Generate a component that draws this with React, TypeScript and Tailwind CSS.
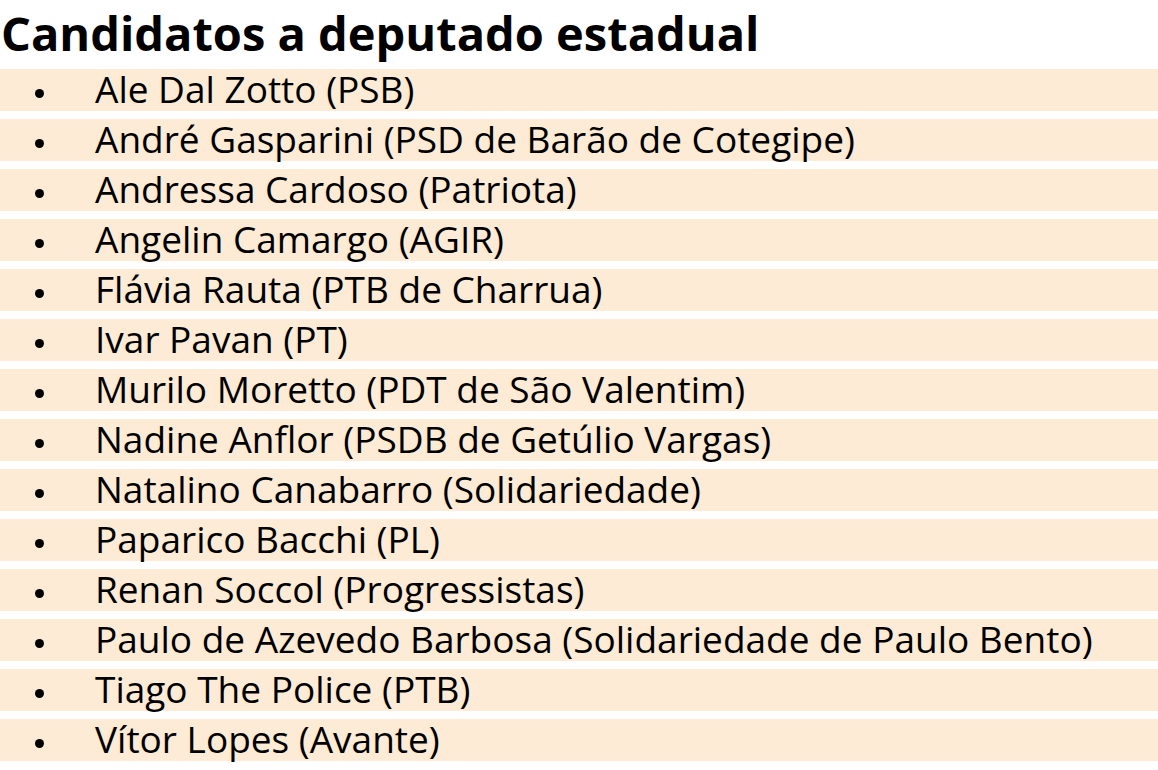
const candidatos = [
  "Ale Dal Zotto (PSB)",
  "André Gasparini (PSD de Barão de Cotegipe)",
  "Andressa Cardoso (Patriota)",
  "Angelin Camargo (AGIR)",
  "Flávia Rauta (PTB de Charrua)",
  "Ivar Pavan (PT)",
  "Murilo Moretto (PDT de São Valentim)",
  "Nadine Anflor (PSDB de Getúlio Vargas)",
  "Natalino Canabarro (Solidariedade)",
  "Paparico Bacchi (PL)",
  "Renan Soccol (Progressistas)",
  "Paulo de Azevedo Barbosa (Solidariedade de Paulo Bento)",
  "Tiago The Police (PTB)",
  "Vítor Lopes (Avante)",
];

export default function App() {
  return (
    <div className="h-[770px] w-[1158px] bg-white font-['Open_Sans',sans-serif] text-black">
      <h1 className="h-[69px] pt-px pl-px text-[47px] font-bold leading-[64px]">
        Candidatos a deputado estadual
      </h1>
      <ul className="flex flex-col gap-[8px]">
        {candidatos.map((nome) => (
          <li key={nome} className="flex h-[42px] items-start bg-[#fdebd5]">
            <span className="w-[95px] shrink-0 pl-[35px] pt-[19.5px]">
              <span className="block h-[9px] w-[9px] rounded-full bg-black" />
            </span>
            <span className="whitespace-nowrap text-[37px] leading-[40px]">{nome}</span>
          </li>
        ))}
      </ul>
    </div>
  );
}
